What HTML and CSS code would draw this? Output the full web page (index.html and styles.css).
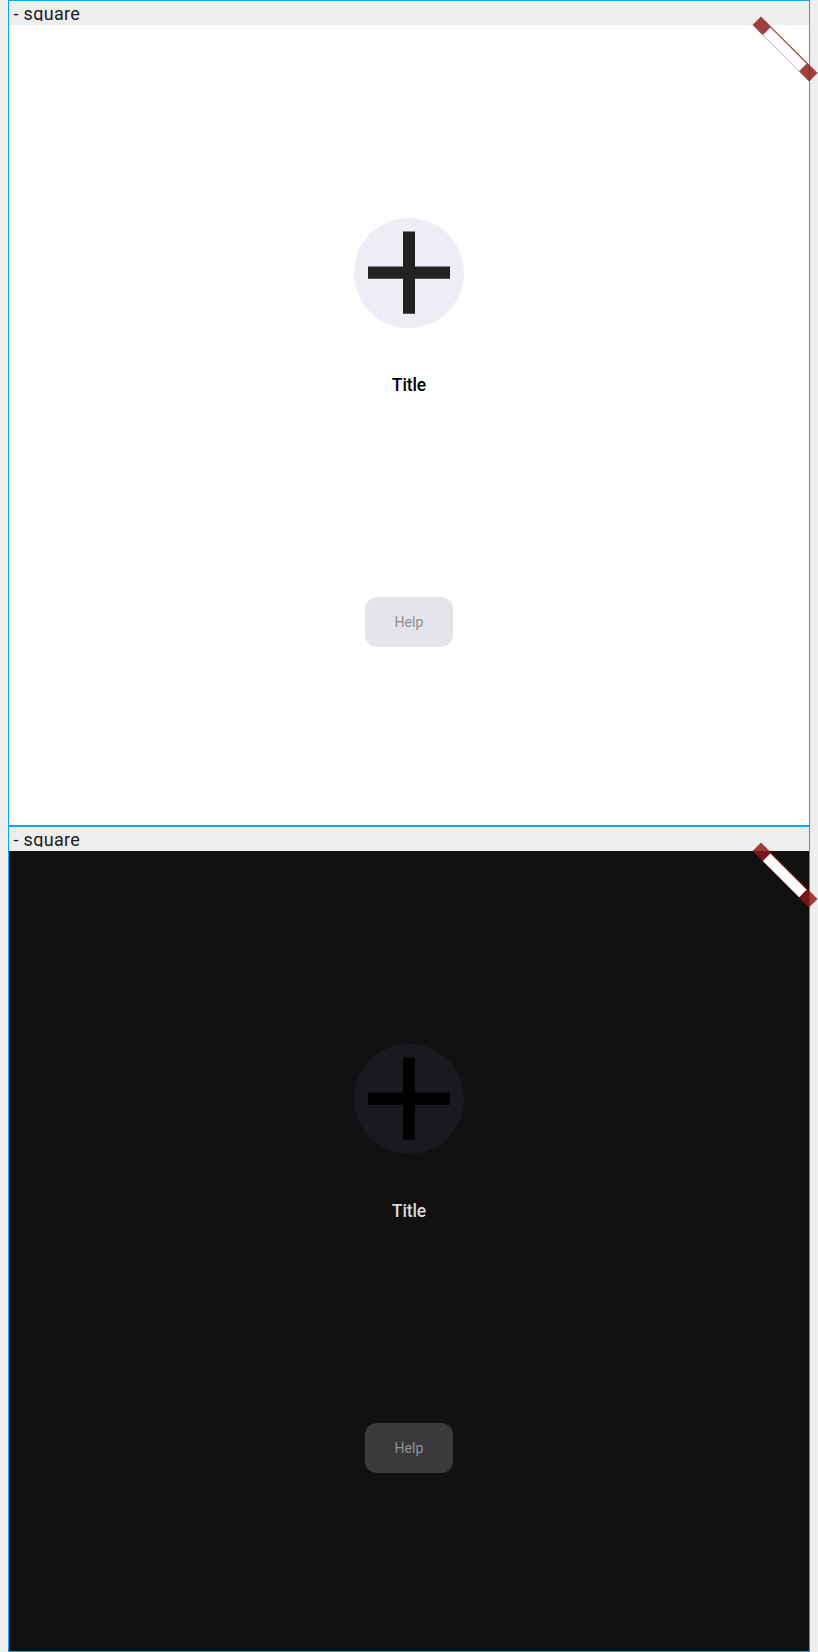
FILE: index.html
```html
<!DOCTYPE html>
<html lang="en">
<head>
<meta charset="utf-8">
<title>square</title>
<link rel="stylesheet" href="styles.css">
</head>
<body>
<main class="scenarios">
  <section class="scenario light">
    <div class="label">- square</div>
    <div class="screen">
      <svg class="plus" width="110" height="110" viewBox="0 0 110 110"><circle class="disc" cx="55" cy="55" r="55"/><path class="cross" d="M49 13.6h12v35h35v12.2H61v35H49v-35H14V48.6h35z"/></svg>
      <h1 class="title">Title</h1>
      <button class="help">Help</button>
    </div>
    <svg class="banner" width="66" height="66" viewBox="0 0 66 66"><g transform="translate(9 .5) rotate(45)"><rect class="ribbon" width="80" height="12"/><path class="letters" d="M14.4 1.2h51.2v10.5H14.4z"/><path class="seams" d="M24.6 1v10.5M34.8 1v10.5M45 1v10.5M55.3 1v10.5"/></g></svg>
  </section>
  <section class="scenario dark">
    <div class="label">- square</div>
    <div class="screen">
      <svg class="plus" width="110" height="110" viewBox="0 0 110 110"><circle class="disc" cx="55" cy="55" r="55"/><path class="cross" d="M49 13.6h12v35h35v12.2H61v35H49v-35H14V48.6h35z"/></svg>
      <h1 class="title">Title</h1>
      <button class="help">Help</button>
    </div>
    <svg class="banner" width="66" height="66" viewBox="0 0 66 66"><g transform="translate(9 .5) rotate(45)"><rect class="ribbon" width="80" height="12"/><path class="letters" d="M14.4 1.2h51.2v10.5H14.4z"/><path class="seams" d="M24.6 1v10.5M34.8 1v10.5M45 1v10.5M55.3 1v10.5"/></g></svg>
  </section>
</main>
</body>
</html>
```
FILE: styles.css
```css
* { box-sizing: border-box; }
body {
  margin: 0;
  background: #eee;
  font-family: Roboto, sans-serif;
}
.scenarios {
  display: flex;
  flex-direction: column;
  padding: 0 8px;
}
.scenario {
  position: relative;
  height: 826px;
  border: 1px solid #03a9f4;
}
.label {
  height: 20px;
  margin-bottom: 4px;
  padding-left: 4.5px;
  overflow: hidden;
  font-size: 18px;
  letter-spacing: .3px;
  line-height: 25px;
  color: #1d1b20;
}
.screen {
  display: flex;
  flex-direction: column;
  align-items: center;
  height: 800px;
  padding-top: 193px;
  background: #fff;
}
.plus { display: block; }
.disc { fill: #efecf6; }
.cross { fill: #212121; }
.title {
  margin: 45px 0 0;
  font-size: 17.5px;
  font-weight: 500;
  letter-spacing: -.1px;
  line-height: 24px;
  color: #000;
}
.help {
  width: 88px;
  height: 50px;
  margin-top: 200px;
  padding: 0;
  border: 0;
  border-radius: 12px;
  background: #e5e4ea;
  color: #8d8c91;
  font: 400 14px/20px Roboto, sans-serif;
  letter-spacing: .1px;
}
.dark .screen { background: #111; }
.dark .disc { fill: #1b1820; }
.dark .cross { fill: #000; }
.dark .title { color: #d9d9dc; }
.dark .help { background: #3a3a3c; color: #929294; }
.banner {
  position: absolute;
  top: 15px;
  right: -9px;
  overflow: visible;
}
.ribbon { fill: rgba(141, 25, 25, .83); }
.letters { fill: #fff; }
.seams { stroke: #f0dede; stroke-width: .5; }
```
